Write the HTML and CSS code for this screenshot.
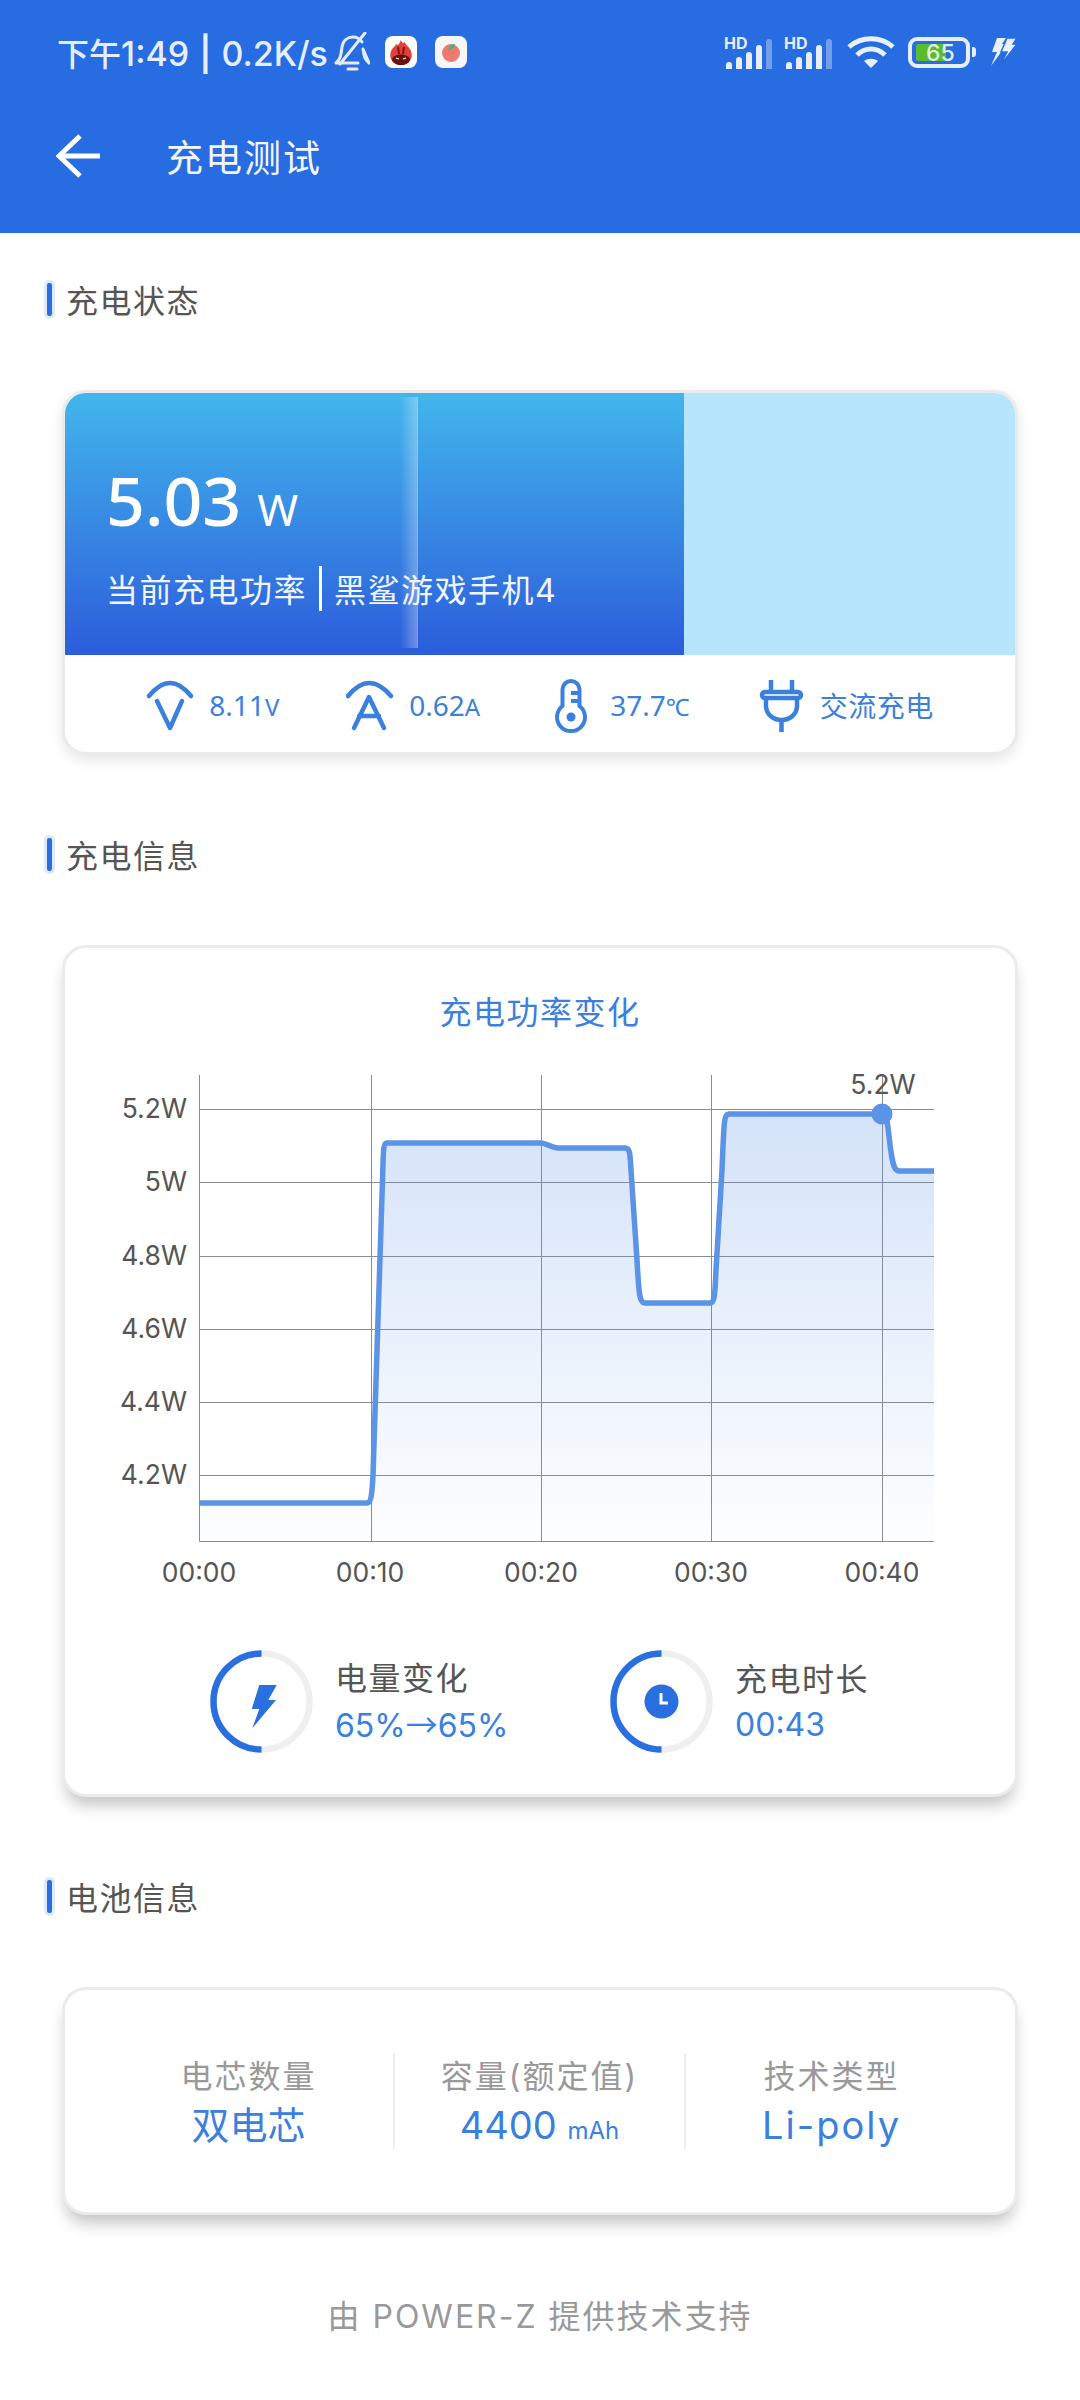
FILE: index.html
```html
<!DOCTYPE html>
<html lang="zh-CN">
<head>
   <meta charset="UTF-8">
   <meta name="viewport" content="width=device-width, initial-scale=1.0">
   <title>充电测试</title>
   <link rel="stylesheet" href="styles.css">
</head>
<body>
   <!-- Header: status bar and title -->
   <header class="app-header">
       <div class="status-bar">
           <span class="status-text"><span class="status-cjk">下午</span>1:49<b class="status-sep">|</b>0.2K/s</span>
           <svg class="bell" viewBox="0 0 36 40" fill="none" stroke="#e3ecfb" stroke-width="3" stroke-linecap="round" stroke-linejoin="round">
               <path d="M2 31 C7 27 7 22 8 15 C9 8 14 5 19 5 C23 5 26 7 28 10 M29 17 C30 23 30 27 35 31 Z M2 31 H24"/>
               <path d="M6 32 L31 1"/>
               <path d="M14 37 H23"/>
           </svg>
           <svg class="app-icon" viewBox="0 0 32 32">
               <rect width="32" height="32" rx="8" fill="#fff"/>
               <path d="M16 4 C17 8 19 7 20 6 C20 9 24 10 26 15 C29 23 23 29 16 29 C9 29 3 23 6 15 C8 11 10 11 11 8 C12 9 13 9 13 9 C14 8 15 6 16 4 Z" fill="#e0403a"/>
               <path d="M13 11 L14 18 M19 11 L18 18" stroke="#7d1414" stroke-width="2"/>
               <path d="M7 23 C9 17 23 17 25 23 C25 27 20 29 16 29 C12 29 7 27 7 23 Z" fill="#6d1010"/>
               <path d="M11 22 L14 23 M21 22 L18 23" stroke="#fff" stroke-width="1.3"/>
           </svg>
           <svg class="app-icon" viewBox="0 0 32 32">
               <rect width="32" height="32" rx="8" fill="#f7f7f7"/>
               <circle cx="16" cy="17" r="9" fill="#ef7a72"/>
               <path d="M13 16 L15 9 L20 8 L19 12 L16 13 Z" fill="#35b58a"/>
           </svg>
           <div class="status-right">
               <div class="signal"><b>HD</b><i class="s1"></i><i class="s2"></i><i class="s3"></i><i class="s4"></i><i class="s5"></i></div>
               <div class="signal"><b>HD</b><i class="s1"></i><i class="s2"></i><i class="s3"></i><i class="s4"></i><i class="s5"></i></div>
               <svg class="wifi" viewBox="0 0 48 34" fill="none" stroke="#e8f0fc" stroke-width="5">
                   <path d="M2 12 C14 1 34 1 46 12"/>
                   <path d="M10 20 C18 12 30 12 38 20"/>
                   <path d="M24 33 L17 26 C21 23 27 23 31 26 Z" fill="#e8f0fc" stroke="none"/>
               </svg>
               <div class="battery"><span class="battery-level"></span><span class="battery-num">65</span></div>
               <span class="battery-tip"></span>
               <svg class="charge" viewBox="0 0 28 30" fill="#e8f0fc">
                   <path d="M7 1 H16 L12 7 H17 L1 29 L7 15 H2 Z"/>
                   <path d="M17 1 H27 L23 7 H27 L10 29 L17 15 H11 Z" stroke="#276ce0" stroke-width="1.5"/>
               </svg>
           </div>
       </div>
       <div class="title-bar">
           <svg class="back" viewBox="0 0 44 44" fill="none" stroke="#fff" stroke-width="5">
               <path d="M24 2 L3 22 L24 42"/>
               <path d="M3 22 H44"/>
           </svg>
           <h1 class="page-title">充电测试</h1>
       </div>
   </header>

   <!-- Charging status -->
   <div class="section-head first"><span class="mark"></span>充电状态</div>
   <section class="card status-card">
       <div class="hero">
           <div class="hero-fill">
               <div class="power"><span class="power-num">5.03</span><span class="power-unit">W</span></div>
               <div class="hero-sub"><span>当前充电功率</span><span class="hero-line"></span><span>黑鲨游戏手机4</span></div>
           </div>
           <span class="glare"></span>
       </div>
       <div class="stats">
           <div class="stat">
               <svg class="stat-icon" viewBox="0 0 48 64" fill="none" stroke="#3a80dc" stroke-width="4.5" stroke-linecap="round" stroke-linejoin="round">
                   <path d="M3 23 Q24 -3 45 23"/>
                   <path d="M11 28 L24 55 L36 28"/>
               </svg>
               <span>8.11<small>V</small></span>
           </div>
           <div class="stat">
               <svg class="stat-icon" viewBox="0 0 48 64" fill="none" stroke="#3a80dc" stroke-width="4.5" stroke-linecap="round" stroke-linejoin="round">
                   <path d="M2 23 Q23 -3 45 23"/>
                   <path d="M8 55 L23 24 L38 55"/>
                   <path d="M13 43 H33"/>
               </svg>
               <span>0.62<small>A</small></span>
           </div>
           <div class="stat">
               <svg class="stat-icon" viewBox="0 0 48 64" fill="none" stroke="#3a80dc" stroke-width="4">
                   <path d="M15.5 33 V16.5 a8.5 8.5 0 0 1 17 0 V33 a14 14 0 1 1 -17 0 Z"/>
                   <path d="M24 20 H32 M24 28 H32"/>
                   <circle cx="24" cy="44" r="4.5" fill="#3a80dc" stroke="none"/>
               </svg>
               <span>37.7<small>℃</small></span>
           </div>
           <div class="stat">
               <svg class="stat-icon" viewBox="0 0 48 64" fill="none" stroke="#3a80dc" stroke-width="4.5">
                   <path d="M14 7 V20 M35 7 V20"/>
                   <rect x="5" y="19" width="39" height="6" rx="3"/>
                   <path d="M9 25 V33 C9 41 16 47 24.5 47 C33 47 40 41 40 33 V25"/>
                   <path d="M24.5 47 V59"/>
               </svg>
               <span>交流充电</span>
           </div>
       </div>
   </section>

   <!-- Charging info -->
   <div class="section-head"><span class="mark"></span>充电信息</div>
   <section class="card info-card">
       <div class="chart-title">充电功率变化</div>
       <svg class="chart" viewBox="65 1060 950 540">
           <defs>
               <linearGradient id="area" x1="0" y1="1114" x2="0" y2="1542" gradientUnits="userSpaceOnUse">
                   <stop offset="0" stop-color="#5b93e6" stop-opacity="0.26"/>
                   <stop offset="1" stop-color="#5b93e6" stop-opacity="0.01"/>
               </linearGradient>
           </defs>
           <!-- grid lines -->
           <g class="grid">
               <path d="M199.5 1075 V1541.5 H934"/>
               <path d="M371.5 1075 V1541 M541.5 1075 V1541 M711.5 1075 V1541 M882.5 1075 V1541"/>
               <path d="M199 1109.5 H934 M199 1182.5 H934 M199 1256.5 H934 M199 1329.5 H934 M199 1402.5 H934 M199 1475.5 H934"/>
           </g>
           <path fill="url(#area)" d="M199 1503 H367 C371 1503 372 1495 373 1475 L382.5 1180 C383.5 1150 383 1143 387 1143 H541 C546 1143 552 1148 558 1148 H625 C630 1148 630 1153 631 1170 L637 1260 C639 1298 640 1303 645 1303 H710 C714 1303 715 1298 716 1270 L722 1170 C724 1120 724 1114 729 1114 H882 C886 1114 887 1117 889 1136 C892 1164 894 1171 899 1171 H934 V1541 H199 Z"/>
           <path class="line" d="M199 1503 H367 C371 1503 372 1495 373 1475 L382.5 1180 C383.5 1150 383 1143 387 1143 H541 C546 1143 552 1148 558 1148 H625 C630 1148 630 1153 631 1170 L637 1260 C639 1298 640 1303 645 1303 H710 C714 1303 715 1298 716 1270 L722 1170 C724 1120 724 1114 729 1114 H882 C886 1114 887 1117 889 1136 C892 1164 894 1171 899 1171 H934"/>
           <circle cx="882" cy="1114" r="10.5" fill="#5b93e6"/>
           <!-- axis labels -->
           <g class="y-labels">
               <text x="187" y="1118">5.2W</text>
               <text x="187" y="1191">5W</text>
               <text x="187" y="1265">4.8W</text>
               <text x="187" y="1338">4.6W</text>
               <text x="187" y="1411">4.4W</text>
               <text x="187" y="1484">4.2W</text>
           </g>
           <g class="x-labels">
               <text x="199" y="1582">00:00</text>
               <text x="370" y="1582">00:10</text>
               <text x="541" y="1582">00:20</text>
               <text x="711" y="1582">00:30</text>
               <text x="882" y="1582">00:40</text>
               <text x="883" y="1094">5.2W</text>
           </g>
       </svg>
       <div class="summary">
           <div class="summary-item">
               <svg class="ring" viewBox="0 0 104 104" fill="none">
                   <circle cx="51.5" cy="51.5" r="48" stroke="#eeefef" stroke-width="6.5"/>
                   <path d="M51.5 3.5 A48 48 0 0 0 51.5 99.5" stroke="#2a6fe0" stroke-width="6.5"/>
                   <path d="M49.3 35 H66.7 L58.3 50 H66 L42.3 78.3 L49.3 59 H41.7 Z" fill="#2a6fe0"/>
               </svg>
               <div>
                   <div class="summary-label">电量变化</div>
                   <div class="summary-value">65%<span class="arrow">→</span>65%</div>
               </div>
           </div>
           <div class="summary-item">
               <svg class="ring" viewBox="0 0 104 104" fill="none">
                   <circle cx="51.5" cy="51.5" r="48" stroke="#eeefef" stroke-width="6.5"/>
                   <path d="M51.5 3.5 A48 48 0 0 0 51.5 99.5" stroke="#2a6fe0" stroke-width="6.5"/>
                   <circle cx="51.5" cy="51.5" r="17" fill="#2a6fe0"/>
                   <path d="M51 43 V53 H58" stroke="#fff" stroke-width="3"/>
               </svg>
               <div>
                   <div class="summary-label">充电时长</div>
                   <div class="summary-value">00:43</div>
               </div>
           </div>
       </div>
   </section>

   <!-- Battery info -->
   <div class="section-head"><span class="mark"></span>电池信息</div>
   <section class="card battery-card">
       <div class="cell">
           <div class="cell-label">电芯数量</div>
           <div class="cell-value">双电芯</div>
       </div>
       <div class="cell">
           <div class="cell-label">容量(额定值)</div>
           <div class="cell-value">4400 <small>mAh</small></div>
       </div>
       <div class="cell">
           <div class="cell-label">技术类型</div>
           <div class="cell-value spaced">Li-poly</div>
       </div>
   </section>

   <footer class="credit">由 POWER-Z 提供技术支持</footer>
</body>
</html>
```

FILE: styles.css
```css
/* page */
body {
    margin: 0;
    background-color: #fff;
    font-family: Inter, "Noto Sans CJK SC", sans-serif;
    color: #555;
}

/* blue header */
.app-header {
    height: 233px;
    background-color: #276ce0;
    overflow: hidden;
}

.status-bar {
    display: flex;
    align-items: center;
    height: 104px;
    padding-left: 57px;
    color: #e6eefb;
}

.status-text {
    font-size: 34px;
    font-weight: 500;
    white-space: nowrap;
    width: 277px;
}

.status-cjk {
    font-size: 32px;
}

.status-sep {
    margin: 0 10px;
    font-weight: 600;
}

.bell {
    width: 36px;
    height: 40px;
}

.app-icon {
    width: 32px;
    height: 32px;
    margin-left: 18px;
}

.bell + .app-icon {
    margin-left: 15px;
}

.status-right {
    display: flex;
    align-items: center;
    margin-left: auto;
    padding-right: 62px;
}

.signal {
    position: relative;
    display: flex;
    align-items: flex-end;
    gap: 4px;
    width: 48px;
    height: 32px;
    margin-right: 12px;
    margin-top: 2px;
}

.signal b {
    position: absolute;
    left: -2px;
    top: -2px;
    font-size: 16px;
    line-height: 16px;
    font-weight: 700;
    color: #e6eefb;
}

.signal i {
    display: block;
    width: 6px;
    background-color: #e6eefb;
    border-radius: 3px 3px 0 0;
}

.signal .s1 { height: 7px; }
.signal .s2 { height: 12px; }
.signal .s3 { height: 17px; }
.signal .s4 { height: 24px; }
.signal .s5 { height: 30px; opacity: 0.4; }

.wifi {
    width: 48px;
    height: 34px;
    margin-left: 1px;
    margin-top: -1px;
}

.battery {
    position: relative;
    box-sizing: border-box;
    width: 62px;
    height: 31px;
    margin-left: 13px;
    border: 4px solid #e6eefb;
    border-radius: 9px;
}

.battery-level {
    position: absolute;
    left: 4px;
    top: 3px;
    width: 30px;
    height: 17px;
    border-radius: 2px;
    background-color: #5cbb2c;
}

.battery-num {
    position: absolute;
    left: 14px;
    top: 0;
    font-size: 23px;
    line-height: 24px;
    font-weight: 500;
    color: #dff0e0;
}

.battery-tip {
    width: 4px;
    height: 10px;
    margin-left: 2px;
    border-radius: 0 3px 3px 0;
    background-color: #e6eefb;
}

.charge {
    width: 28px;
    height: 30px;
    margin-left: 14px;
}

.title-bar {
    display: flex;
    align-items: center;
    height: 106px;
    margin-top: -1px;
    padding-left: 56px;
}

.back {
    width: 44px;
    height: 44px;
}

.page-title {
    margin: 0 0 0 66px;
    font-size: 37px;
    font-weight: 400;
    letter-spacing: 2px;
    color: #f2f6fd;
}

/* section headings */
.section-head {
    display: flex;
    align-items: center;
    height: 40px;
    margin: 79px 0 71px 44px;
    font-size: 32px;
    letter-spacing: 1.5px;
    color: #555;
}

.section-head.first {
    margin-top: 46px;
}

.mark {
    box-sizing: border-box;
    width: 11px;
    height: 39px;
    margin-right: 11px;
    border: 3px solid #dfe9fa;
    border-radius: 5px;
    background-color: #2a6fe0;
}

/* cards */
.card {
    margin: 0 62px;
    border: 3px solid #ebebeb;
    border-radius: 24px;
    background-color: #fff;
    box-shadow: 0 12px 16px -4px rgba(0, 0, 0, 0.24);
    overflow: hidden;
}

/* charging status card */
.status-card {
    box-shadow: 0 5px 14px rgba(0, 0, 0, 0.1);
}

.hero {
    position: relative;
    height: 262px;
    background-color: #b7e5fd;
}

.hero-fill {
    box-sizing: border-box;
    width: 619px;
    height: 100%;
    padding: 67px 0 0 41px;
    background: linear-gradient(180deg, #42b6ec, #2c5cdb);
    color: #fff;
}

.power {
    display: flex;
    align-items: baseline;
    height: 80px;
    line-height: 80px;
    font-family: "Noto Sans", sans-serif;
}

.power-num {
    font-size: 68px;
    font-weight: 500;
}

.power-unit {
    margin-left: 16px;
    font-size: 44px;
}

.hero-sub {
    display: flex;
    align-items: center;
    gap: 12px;
    height: 46px;
    margin-top: 25px;
    font-size: 32px;
    letter-spacing: 1.5px;
    white-space: nowrap;
    color: #f0f5fe;
}

.hero-line {
    width: 3px;
    height: 45px;
    background-color: #fff;
}

.glare {
    position: absolute;
    left: 335px;
    top: 4px;
    width: 17px;
    height: 251px;
    border-right: 1px solid rgba(255, 255, 255, 0.35);
    background: linear-gradient(90deg, rgba(255, 255, 255, 0), rgba(255, 255, 255, 0.3));
}

.stats {
    display: flex;
    align-items: center;
    justify-content: center;
    gap: 67px;
    height: 97px;
    padding-top: 2px;
    box-sizing: border-box;
    color: #3a80dc;
    font-family: "Noto Sans", "Noto Sans CJK SC", sans-serif;
    font-size: 28px;
}

.stat {
    display: flex;
    align-items: center;
    gap: 15px;
}

.stat small {
    font-size: 24px;
}

.stat:last-child {
    letter-spacing: 0.5px;
}

.stat-icon {
    width: 48px;
    height: 64px;
}

/* charging info card */
.info-card {
    height: 846px;
}

.chart-title {
    margin-top: 43px;
    line-height: 44px;
    text-align: center;
    font-size: 32px;
    letter-spacing: 1.5px;
    color: #3a80dc;
}

.chart {
    display: block;
    width: 950px;
    height: 540px;
    margin-top: 25px;
}

.grid path {
    fill: none;
    stroke: #8c8c8c;
    stroke-width: 1;
}

.line {
    fill: none;
    stroke: #5b93e6;
    stroke-width: 5.5;
    stroke-linejoin: round;
}

.chart text {
    font-family: Inter, sans-serif;
    font-size: 26.5px;
    fill: #555;
}

.y-labels text {
    text-anchor: end;
}

.x-labels text {
    text-anchor: middle;
}

.summary {
    display: grid;
    grid-template-columns: 400px auto;
    margin: 50px 0 0 145px;
}

.summary-item {
    display: flex;
    align-items: center;
    gap: 21px;
}

.ring {
    width: 104px;
    height: 104px;
}

.summary-label {
    font-size: 32px;
    line-height: 45px;
    letter-spacing: 1.5px;
    color: #555;
}

.summary-value {
    font-size: 32px;
    line-height: 45px;
    color: #3a80dc;
}

.arrow {
    font-family: "Noto Sans CJK SC", sans-serif;
}

/* battery info card */
.battery-card {
    display: grid;
    grid-template-columns: repeat(3, 1fr);
    padding: 63px 38px 63px 39px;
}

.cell {
    height: 96px;
    border-right: 2px solid #eee;
    text-align: center;
}

.cell:last-child {
    border-right: none;
}

.cell-label {
    font-size: 32px;
    line-height: 48px;
    letter-spacing: 2px;
    color: #999;
}

.cell-value {
    font-size: 38px;
    line-height: 48px;
    color: #3a80dc;
}

.cell-value.spaced {
    letter-spacing: 2px;
}

.cell-value small {
    font-size: 24px;
}

/* footer */
.credit {
    margin-top: 80px;
    line-height: 44px;
    text-align: center;
    font-size: 32px;
    letter-spacing: 2px;
    color: #999;
}
```
